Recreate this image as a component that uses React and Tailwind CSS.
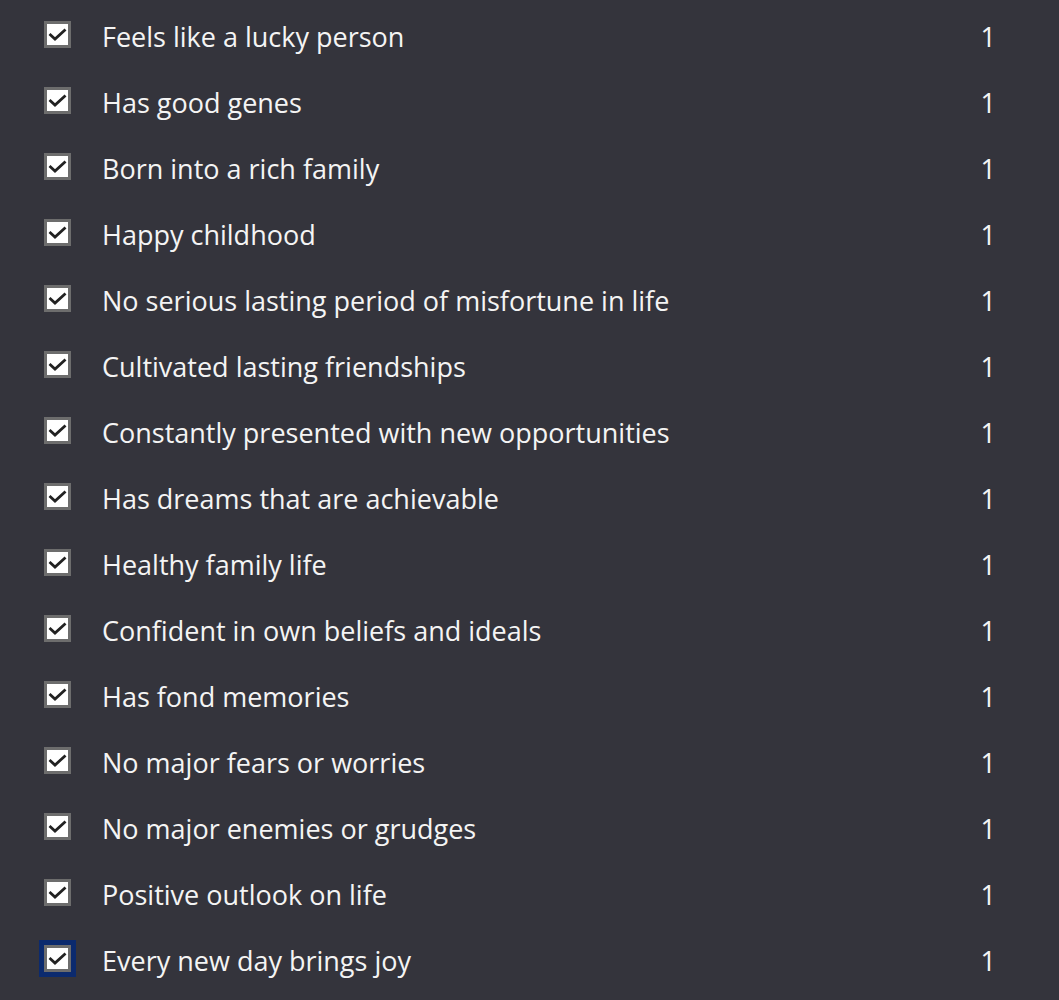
const items = [
  'Feels like a lucky person',
  'Has good genes',
  'Born into a rich family',
  'Happy childhood',
  'No serious lasting period of misfortune in life',
  'Cultivated lasting friendships',
  'Constantly presented with new opportunities',
  'Has dreams that are achievable',
  'Healthy family life',
  'Confident in own beliefs and ideals',
  'Has fond memories',
  'No major fears or worries',
  'No major enemies or grudges',
  'Positive outlook on life',
  'Every new day brings joy',
]

const Check = ({ focused }) => (
  <span
    className={`flex w-[27px] h-[27px] shrink-0 items-center justify-center bg-white border-[3px] border-[#6d6d6d] ${
      focused ? 'outline-[5px] outline-solid outline-[#0b2a6e]' : ''
    }`}
  >
    <svg width="19" height="13" viewBox="0 0 19 13" fill="none">
      <path d="M1.5 6 L7 11 L17.5 1.5" stroke="#222" strokeWidth="2.8" />
    </svg>
  </span>
)

export default function App() {
  return (
    <div className="min-h-[1000px] bg-[#34343c] pt-[1px] font-['Open_Sans',sans-serif] text-[#f4f4f4]">
      {items.map((text, i) => (
        <div key={text} className="flex h-[66px] items-center pl-[44px] pr-[63px]">
          <Check focused={i === items.length - 1} />
          <span className="ml-[31px] mt-[5px] flex-1 text-[27px] leading-none">{text}</span>
          <span className="mt-[5px] text-[27px] leading-none">1</span>
        </div>
      ))}
    </div>
  )
}
